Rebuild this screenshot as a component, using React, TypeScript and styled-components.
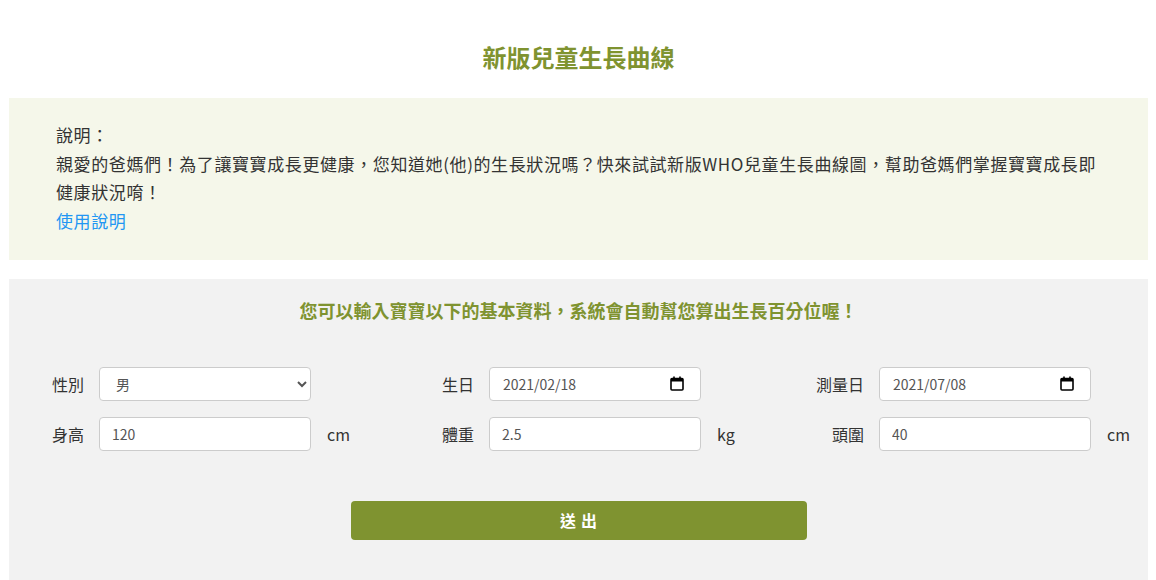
import React from "react";
import styled, { createGlobalStyle } from "styled-components";

const Global = createGlobalStyle`
  html, body { margin: 0; padding: 0; background: #fff; }
  body {
    font-family: "Noto Sans CJK TC", "Noto Sans", sans-serif;
    color: #333;
  }
  * { box-sizing: border-box; }
`;

const Page = styled.div`
  padding: 0 8px 0 9px;
`;

const Title = styled.h1`
  margin: 0;
  padding-top: 40px;
  height: 98px;
  text-align: center;
  font-size: 24px;
  line-height: 34px;
  font-weight: 700;
  color: #7f9330;
`;

const InfoBox = styled.section`
  background: #f5f7ea;
  padding: 23px 47px 24px;
  font-size: 17px;
  letter-spacing: 0.6px;
  line-height: 28.7px;
  color: #333;
`;

const InfoLine = styled.p`
  margin: 0;
`;

const Link = styled.a`
  color: #2196f3;
  text-decoration: none;
`;

const FormPanel = styled.section`
  margin-top: 19px;
  background: #f2f2f2;
  padding: 17px 0 42px;
`;

const SubTitle = styled.h2`
  margin: 0;
  text-align: center;
  font-size: 18px;
  line-height: 28px;
  font-weight: 700;
  color: #7f9330;
`;

const Grid = styled.div`
  margin-top: 43px;
  padding-left: 14px;
  display: grid;
  grid-template-columns: 390px 390px 1fr;
  row-gap: 16px;
`;

const Field = styled.div`
  display: flex;
  align-items: center;
  height: 34px;
`;

const Label = styled.label`
  width: 76px;
  padding-right: 15px;
  text-align: right;
  font-size: 16px;
  color: #333;
  flex-shrink: 0;
`;

const controlBox = `
  width: 212px;
  height: 34px;
  border: 1px solid #ccc;
  border-radius: 4px;
  background: #fff;
  font-family: "Noto Sans CJK TC", "Noto Sans", sans-serif;
  font-size: 14px;
  color: #555;
`;

const TextInput = styled.input`
  ${controlBox}
  padding: 0 12px;
  outline: none;
`;

const Select = styled.select`
  ${controlBox}
  padding: 0 8px 0 12px;
  outline: none;
`;

const DateBox = styled.div`
  ${controlBox}
  display: flex;
  align-items: center;
  justify-content: space-between;
  padding: 0 16px 0 13px;
`;

const DateText = styled.input`
  border: none;
  background: transparent;
  outline: none;
  padding: 0;
  width: 120px;
  font-family: inherit;
  font-size: 14px;
  color: #555;
`;

const Unit = styled.span`
  margin-left: 16px;
  font-size: 16px;
  color: #333;
`;

const ButtonRow = styled.div`
  margin-top: 50px;
  display: flex;
  justify-content: center;
`;

const Submit = styled.button`
  width: 456px;
  height: 39px;
  border: none;
  border-radius: 4px;
  background: #7f9330;
  color: #fff;
  font-family: "Noto Sans CJK TC", "Noto Sans", sans-serif;
  font-size: 16px;
  font-weight: 700;
  letter-spacing: 5px;
  padding-left: 11px;
  cursor: pointer;
`;

const CalendarIcon = () => (
  <svg width="14" height="15" viewBox="0 0 14 15" aria-hidden="true">
    <rect x="1" y="2.5" width="12" height="11.5" rx="1" fill="none" stroke="#000" strokeWidth="1.6" />
    <rect x="1" y="2.5" width="12" height="3" fill="#000" />
    <rect x="3.2" y="0.5" width="1.6" height="3" fill="#000" />
    <rect x="9.2" y="0.5" width="1.6" height="3" fill="#000" />
  </svg>
);

const DateField = ({ value }: { value: string }) => (
  <DateBox>
    <DateText readOnly value={value} />
    <CalendarIcon />
  </DateBox>
);

export default function App() {
  return (
    <>
      <Global />
      <Page lang="zh-Hant-TW">
        <Title>新版兒童生長曲線</Title>
        <InfoBox>
          <InfoLine>說明：</InfoLine>
          <InfoLine>
            親愛的爸媽們！為了讓寶寶成長更健康，您知道她(他)的生長狀況嗎？快來試試新版WHO兒童生長曲線圖，幫助爸媽們掌握寶寶成長即健康狀況唷！
          </InfoLine>
          <InfoLine>
            <Link href="#">使用說明</Link>
          </InfoLine>
        </InfoBox>
        <FormPanel>
          <SubTitle>您可以輸入寶寶以下的基本資料，系統會自動幫您算出生長百分位喔！</SubTitle>
          <Grid>
            <Field>
              <Label>性別</Label>
              <Select defaultValue="男">
                <option value="男">男</option>
                <option value="女">女</option>
              </Select>
            </Field>
            <Field>
              <Label>生日</Label>
              <DateField value="2021/02/18" />
            </Field>
            <Field>
              <Label>測量日</Label>
              <DateField value="2021/07/08" />
            </Field>
            <Field>
              <Label>身高</Label>
              <TextInput defaultValue="120" />
              <Unit>cm</Unit>
            </Field>
            <Field>
              <Label>體重</Label>
              <TextInput defaultValue="2.5" />
              <Unit>kg</Unit>
            </Field>
            <Field>
              <Label>頭圍</Label>
              <TextInput defaultValue="40" />
              <Unit>cm</Unit>
            </Field>
          </Grid>
          <ButtonRow>
            <Submit>送出</Submit>
          </ButtonRow>
        </FormPanel>
      </Page>
    </>
  );
}
